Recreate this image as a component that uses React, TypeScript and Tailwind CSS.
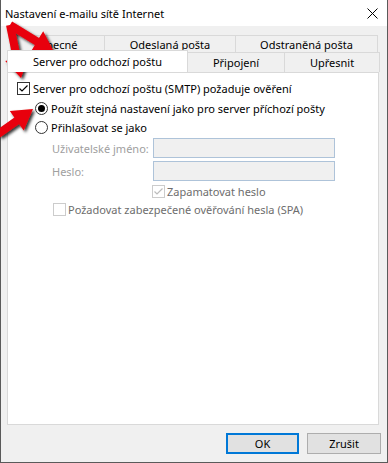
import React from "react";

function arrowPts(x1: number, y1: number, x2: number, y2: number, sw = 8, hw = 24, hl = 20) {
  const dx = x2 - x1, dy = y2 - y1;
  const len = Math.hypot(dx, dy);
  const ux = dx / len, uy = dy / len;
  const nx = -uy, ny = ux;
  const bx = x2 - ux * hl, by = y2 - uy * hl;
  const p = [
    [x1 + nx * sw / 2, y1 + ny * sw / 2],
    [bx + nx * sw / 2, by + ny * sw / 2],
    [bx + nx * hw / 2, by + ny * hw / 2],
    [x2, y2],
    [bx - nx * hw / 2, by - ny * hw / 2],
    [bx - nx * sw / 2, by - ny * sw / 2],
    [x1 - nx * sw / 2, y1 - ny * sw / 2],
  ];
  return p.map((q) => q.map((v) => v.toFixed(1)).join(",")).join(" ");
}

function Check({ disabled }: { disabled?: boolean }) {
  return (
    <svg width="13" height="13" viewBox="0 0 13 13" className="block shrink-0">
      <rect x="0.5" y="0.5" width="12" height="12" fill="#fff" stroke={disabled ? "#cccccc" : "#333333"} />
      <path d="M2.5 6.5 L5 9 L10.5 3.5" fill="none" stroke={disabled ? "#bcbcbc" : "#000"} strokeWidth="1.2" />
    </svg>
  );
}

function EmptyCheck() {
  return (
    <svg width="13" height="13" viewBox="0 0 13 13" className="block shrink-0">
      <rect x="0.5" y="0.5" width="12" height="12" fill="#fff" stroke="#cccccc" />
    </svg>
  );
}

function Radio({ on }: { on?: boolean }) {
  return (
    <svg width="13" height="13" viewBox="0 0 13 13" className="block shrink-0">
      <circle cx="6.5" cy="6.5" r="6" fill="#fff" stroke="#333333" />
      {on && <circle cx="6.5" cy="6.5" r="3.5" fill="#000" />}
    </svg>
  );
}

export default function App() {
  const font = { fontFamily: '"Noto Sans", "Liberation Sans", sans-serif' };
  return (
    <div className="relative w-[388px] h-[463px] overflow-hidden bg-[#f0f0f0] text-[11px] text-black whitespace-nowrap" style={font}>
      <div className="flex flex-col w-full h-full border-l border-r border-b border-[#5a5a5a]">
        {/* title bar */}
        <div className="h-[26px] bg-white flex items-center justify-between pl-[4px] pr-[9px] shrink-0">
          <span className="leading-none text-[11px]">Nastavení e-mailu sítě Internet</span>
          <svg width="11" height="11" viewBox="0 0 11 11">
            <path d="M0.5 0.5 L10.5 10.5 M10.5 0.5 L0.5 10.5" stroke="#000" strokeWidth="1" />
          </svg>
        </div>
        {/* tabs */}
        <div className="mt-[9px] flex flex-col">
          <div className="flex h-[17px] pl-[9px]">
            <div className="w-[94px] border-t border-l border-[#d9d9d9] flex items-center justify-center leading-none">Obecné</div>
            <div className="w-[131px] border-t border-l border-[#d9d9d9] flex items-center justify-center leading-none">Odeslaná pošta</div>
            <div className="w-[143px] border-t border-l border-r border-[#d9d9d9] flex items-center justify-center leading-none">Odstraněná pošta</div>
          </div>
          <div className="flex h-[20px] pl-[6px] relative z-10">
            <div className="w-[181px] h-[22px] -mt-[2px] bg-white border-t border-l border-r border-[#d9d9d9] flex items-center justify-center leading-none">Server pro odchozí poštu</div>
            <div className="w-[96px] border-t border-[#d9d9d9] flex items-center justify-center leading-none">Připojení</div>
            <div className="w-[96px] border-t border-l border-r border-[#d9d9d9] flex items-center justify-center leading-none">Upřesnit</div>
          </div>
        </div>
        {/* panel */}
        <div className="ml-[6px] w-[372px] h-[353px] bg-white border border-[#d9d9d9] pl-[9px] pt-[9px] flex flex-col">
          <div className="flex items-center h-[13px] gap-[3px]">
            <Check />
            <span className="leading-none">Server pro odchozí poštu (SMTP) požaduje ověření</span>
          </div>
          <div className="flex items-center h-[13px] gap-[3px] mt-[7px] pl-[18px]">
            <Radio on />
            <span className="leading-none">Použít stejná nastavení jako pro server příchozí pošty</span>
          </div>
          <div className="flex items-center h-[13px] gap-[3px] mt-[6px] pl-[18px]">
            <Radio />
            <span className="leading-none">Přihlašovat se jako</span>
          </div>
          <div className="flex items-center h-[20px] mt-[4px] pl-[35px]">
            <span className="w-[101px] leading-none text-[#a0a0a0]">Uživatelské jméno:</span>
            <div className="w-[182px] h-[20px] bg-[#f0f0f0] border border-[#aec3d9]" />
          </div>
          <div className="flex items-center h-[20px] mt-[3px] pl-[35px]">
            <span className="w-[101px] leading-none text-[#a0a0a0]">Heslo:</span>
            <div className="w-[182px] h-[20px] bg-[#f0f0f0] border border-[#aec3d9]" />
          </div>
          <div className="flex items-center h-[13px] gap-[2px] mt-[4px] pl-[135px]">
            <Check disabled />
            <span className="leading-none text-[#6d6d6d]">Zapamatovat heslo</span>
          </div>
          <div className="flex items-center h-[13px] gap-[2px] mt-[5px] pl-[36px]">
            <EmptyCheck />
            <span className="leading-none text-[#6d6d6d]">Požadovat zabezpečené ověřování hesla (SPA)</span>
          </div>
        </div>
        {/* buttons */}
        <div className="flex justify-end gap-[8px] mt-[8px] pr-[6px]">
          <div className="w-[73px] h-[21px] bg-[#e1e1e1] border-2 border-[#0078d7] flex items-center justify-center leading-none">OK</div>
          <div className="w-[74px] h-[21px] bg-[#e1e1e1] border border-[#adadad] flex items-center justify-center leading-none">Zrušit</div>
        </div>
      </div>
      {/* annotation arrows */}
      <svg className="absolute left-0 top-0 pointer-events-none" width="388" height="463">
        <defs>
          <filter id="sh" x="-50%" y="-50%" width="200%" height="200%">
            <feDropShadow dx="2" dy="2" stdDeviation="1.5" floodColor="#000" floodOpacity="0.8" />
          </filter>
        </defs>
        <g filter="url(#sh)" fill="#e8000a">
          <polygon points={arrowPts(10, 25, 21, 78)} />
          <polygon points={arrowPts(10, 25, 54, 52)} />
          <polygon points={arrowPts(-2, 134, 33, 109)} />
        </g>
      </svg>
    </div>
  );
}
